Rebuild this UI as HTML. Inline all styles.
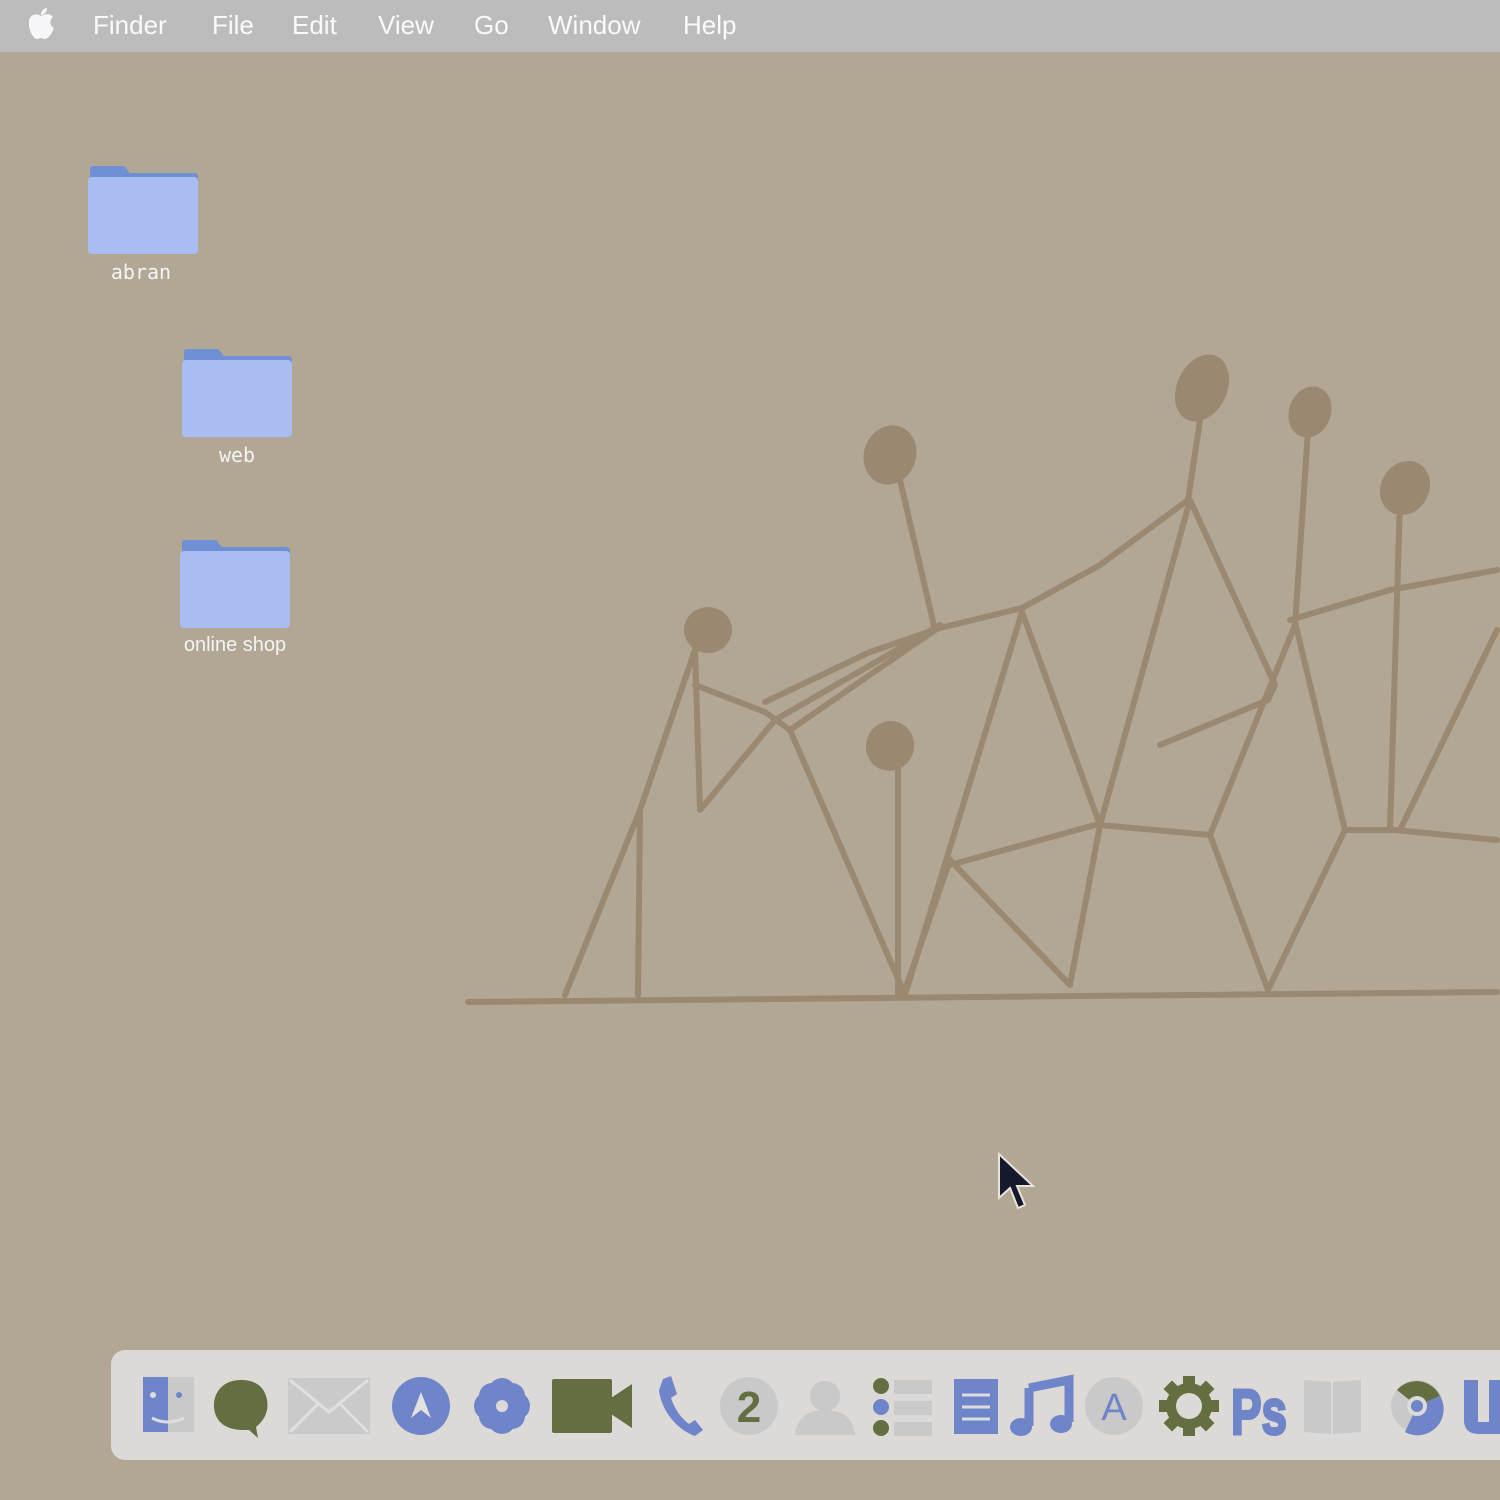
<!DOCTYPE html>
<html><head><meta charset="utf-8"><style>
html,body{margin:0;padding:0;width:1500px;height:1500px;overflow:hidden;background:#b2a794;font-family:"Liberation Sans","DejaVu Sans",sans-serif}
.menu{position:absolute;left:0;top:0;width:1500px;height:52px;background:#bcbcbc}
.menu span{position:absolute;top:10px;color:#fafafa;font-size:26px}
.folder{position:absolute;width:110px;height:90px}
.lbl{position:absolute;color:#f4f4f4;font-size:20px;font-family:"DejaVu Sans Mono","Liberation Mono",monospace;text-align:center;width:160px}
.dock{position:absolute;left:111px;top:1350px;width:1420px;height:110px;background:#dcd9d7;border-radius:14px}
</style></head><body>
<div class="menu">
<svg style="position:absolute;left:27px;top:7px" width="28" height="34" viewBox="0 0 28 34"><path d="M14 9 C10 6 3 7 2 14 C1 22 6 32 10 32 C12 32 13 31 14 31 C15 31 16 32 18 32 C22 32 26 24 27 21 C23 19 22 13 26 10 C23 6 18 7 14 9Z M14 8 C14 4 17 1 20 1 C20 5 17 8 14 8Z" fill="#f7f7fa"/></svg>
<span style="left:93px">Finder</span><span style="left:212px">File</span><span style="left:292px">Edit</span><span style="left:378px">View</span><span style="left:474px">Go</span><span style="left:548px">Window</span><span style="left:683px">Help</span>
</div>

<svg class="folder" style="left:88px;top:165px" viewBox="0 0 110 90"><path d="M2 4 Q2 1 5 1 H36 L42 8 H106 Q110 8 110 12 V20 H2Z" fill="#7090d6"/><rect x="0" y="12" width="110" height="77" rx="4" fill="#a9bdf2"/></svg>
<div class="lbl" style="left:61px;top:260px">abran</div>
<svg class="folder" style="left:182px;top:348px" viewBox="0 0 110 90"><path d="M2 4 Q2 1 5 1 H36 L42 8 H106 Q110 8 110 12 V20 H2Z" fill="#7090d6"/><rect x="0" y="12" width="110" height="77" rx="4" fill="#a9bdf2"/></svg>
<div class="lbl" style="left:157px;top:443px">web</div>
<svg class="folder" style="left:180px;top:539px" viewBox="0 0 110 90"><path d="M2 4 Q2 1 5 1 H36 L42 8 H106 Q110 8 110 12 V20 H2Z" fill="#7090d6"/><rect x="0" y="12" width="110" height="77" rx="4" fill="#a9bdf2"/></svg>
<div class="lbl" style="left:155px;top:634px;font-family:'Liberation Sans Narrow','Liberation Sans',sans-serif">online shop</div>

<svg style="position:absolute;left:0;top:0" width="1500" height="1500" fill="none" stroke="#9b8870" stroke-width="6" stroke-linecap="round" stroke-linejoin="round">
<g fill="#9b8870" stroke="none">
<ellipse cx="708" cy="630" rx="24" ry="23"/><ellipse cx="890" cy="455" rx="26" ry="30" transform="rotate(20 890 455)"/><ellipse cx="1202" cy="388" rx="25" ry="35" transform="rotate(25 1202 388)"/><ellipse cx="1310" cy="412" rx="21" ry="26" transform="rotate(20 1310 412)"/><ellipse cx="1405" cy="488" rx="24" ry="28" transform="rotate(30 1405 488)"/><ellipse cx="890" cy="746" rx="24" ry="25" transform="rotate(20 890 746)"/>
</g>
<path d="M468 1002 L1497 992"/>
<path d="M565 995 L640 810 L695 650 L700 810 L775 720 L940 625"/>
<path d="M640 810 L638 995"/>
<path d="M695 685 L765 712 L790 730 L905 995"/>
<path d="M765 702 L870 652 L940 628 L1022 608 L1100 565 L1188 500 L1200 420"/>
<path d="M790 730 L935 630 L900 480"/>
<path d="M905 995 L1022 612 L1100 825 L1190 500 L1275 685 L1268 700 L1160 745"/>
<path d="M898 770 L898 995"/>
<path d="M905 990 L950 860 L1070 985 L1100 825 L1210 835 L1268 990 L1345 830 L1395 830 L1497 840"/>
<path d="M950 865 L1095 825"/>
<path d="M1210 835 L1295 625 L1308 430"/>
<path d="M1295 622 L1345 830"/>
<path d="M1290 620 L1390 590 L1497 570"/>
<path d="M1390 830 L1400 500"/>
<path d="M1400 830 L1497 630"/>
</svg>

<svg style="position:absolute;left:996px;top:1152px" width="44" height="60" viewBox="0 0 44 60"><path d="M3 2 L3 46 L14 36 L22 56 L29 53 L21 34 L37 34Z" fill="#141a2c" stroke="#e8e4dc" stroke-width="2"/></svg>

<div class="dock">
<svg style="position:absolute;left:0;top:0" width="1420" height="110" viewBox="0 0 1420 110">
<rect x="32" y="27" width="25" height="55" fill="#6f85c9"/><rect x="57" y="27" width="26" height="55" fill="#c9c9c9"/>
<circle cx="42" cy="45" r="3" fill="#ddd"/><circle cx="68" cy="45" r="3" fill="#6f85c9"/><path d="M41 68 Q56 76 73 68" stroke="#ddd" stroke-width="3" fill="none"/>
<path d="M130 30 C110 30 102 45 103 57 C104 72 115 80 132 80 L138 80 L147 88 L145 77 C154 70 158 60 156 50 C154 38 146 30 130 30Z" fill="#636f40"/>
<rect x="177" y="28" width="82" height="56" fill="#cacaca"/><path d="M179 30 L218 62 L257 30 M179 82 L207 54 M257 82 L229 54" stroke="#e0e0e0" stroke-width="3" fill="none"/>
<ellipse cx="310" cy="56" rx="29" ry="29" fill="#6f85c9"/><path d="M300 68 L310 42 L320 68 L310 60Z" fill="#e4e2e0"/>
<g fill="#6f85c9"><circle cx="391" cy="42" r="14"/><circle cx="391" cy="70" r="14"/><circle cx="377" cy="56" r="14"/><circle cx="405" cy="56" r="14"/><circle cx="381" cy="46" r="13"/><circle cx="401" cy="46" r="13"/><circle cx="381" cy="66" r="13"/><circle cx="401" cy="66" r="13"/></g><circle cx="391" cy="56" r="6" fill="#dcd9d7"/>
<rect x="441" y="29" width="60" height="54" rx="2" fill="#636f40"/><path d="M500 48 L521 34 L521 78 L500 64Z" fill="#636f40"/>
<path d="M552 29 L560 26 L566 44 L560 48 C564 60 570 68 578 74 L584 70 L592 80 L584 86 C566 80 550 60 548 40Z" fill="#6f85c9"/>
<ellipse cx="638" cy="56" rx="29" ry="29" fill="#c9c9c9"/><text x="638" y="72" text-anchor="middle" font-family="Liberation Sans" font-weight="bold" font-size="44" fill="#636f40">2</text>
<circle cx="714" cy="46" r="15" fill="#c9c9c9"/><path d="M684 85 C686 65 700 60 714 60 C728 60 742 65 744 85Z" fill="#c9c9c9"/>
<circle cx="770" cy="36" r="8" fill="#636f40"/><circle cx="770" cy="57" r="8" fill="#6f85c9"/><circle cx="770" cy="78" r="8" fill="#636f40"/>
<rect x="783" y="30" width="38" height="14" fill="#c9c9c9"/><rect x="783" y="51" width="38" height="14" fill="#c9c9c9"/><rect x="783" y="72" width="38" height="14" fill="#c9c9c9"/>
<rect x="843" y="29" width="44" height="55" fill="#6f85c9"/><path d="M851 45 H879 M851 57 H879 M851 69 H879" stroke="#ddd" stroke-width="3"/>
<path d="M918 38 L958 30 L958 72" stroke="#6f85c9" stroke-width="9" fill="none"/><path d="M918 38 L918 76" stroke="#6f85c9" stroke-width="9"/><ellipse cx="910" cy="77" rx="11" ry="9" fill="#6f85c9"/><ellipse cx="950" cy="74" rx="11" ry="9" fill="#6f85c9"/>
<ellipse cx="1003" cy="56" rx="29" ry="29" fill="#c9c9c9"/><text x="1003" y="70" text-anchor="middle" font-family="Liberation Sans" font-size="38" fill="#6f85c9">A</text>
<g fill="#636f40"><circle cx="1078" cy="56" r="23"/>
<rect x="1072" y="26" width="12" height="60"/><rect x="1048" y="50" width="60" height="12"/>
<rect x="1072" y="26" width="12" height="60" transform="rotate(45 1078 56)"/><rect x="1072" y="26" width="12" height="60" transform="rotate(-45 1078 56)"/></g>
<circle cx="1078" cy="56" r="13" fill="#dcd9d7"/>
<text x="1120" y="84" font-family="Liberation Sans" font-weight="bold" font-size="64" fill="#6f85c9" stroke="#6f85c9" stroke-width="3" textLength="56" lengthAdjust="spacingAndGlyphs">Ps</text>
<path d="M1193 30 L1220 32 L1220 84 L1193 82Z M1222 32 L1250 30 L1250 82 L1222 84Z" fill="#c9c9c9"/>
<circle cx="1306" cy="56" r="26" fill="#c9c9c9"/><path d="M1286 40 A26 26 0 0 1 1329 46 L1306 56Z" fill="#636f40"/><path d="M1329 46 A26 26 0 0 1 1294 82 L1306 56Z" fill="#6f85c9"/><circle cx="1306" cy="56" r="10" fill="#dcd9d7"/><circle cx="1306" cy="56" r="6" fill="#6f85c9"/>
<path d="M1353 30 V70 Q1353 84 1368 84 H1390 V30 H1378 V72 H1367 V30Z" fill="#6f85c9"/>
</svg>
</div>
</body></html>
